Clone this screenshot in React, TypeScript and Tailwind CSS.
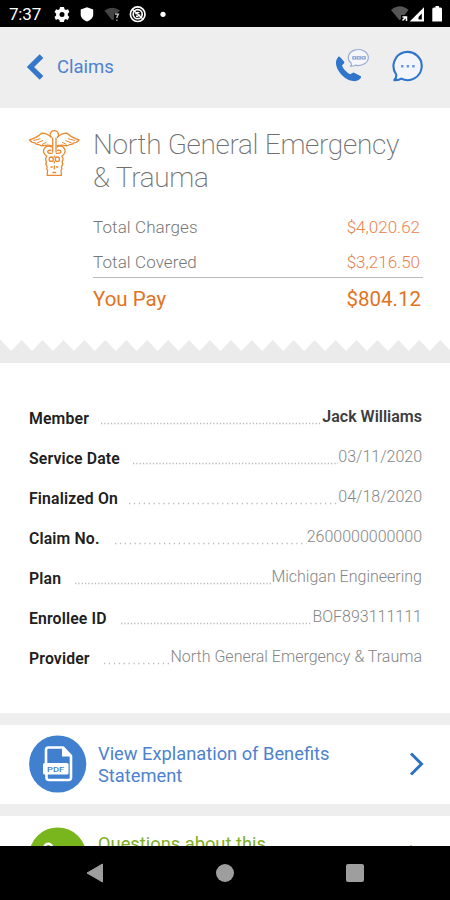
import React from "react";

type Detail = {
  label: string;
  labelWidth: string;
  value: string;
  period: number;
  valueClass: string;
};

const light = "font-light text-[#858585]";

const details: Detail[] = [
  { label: "Member", labelWidth: "w-[71px]", value: "Jack Williams", period: 3.3, valueClass: "font-semibold text-[#3c3c3c]" },
  { label: "Service Date", labelWidth: "w-[103px]", value: "03/11/2020", period: 3.3, valueClass: light },
  { label: "Finalized On", labelWidth: "w-[99px]", value: "04/18/2020", period: 4.9, valueClass: light },
  { label: "Claim No.", labelWidth: "w-[85px]", value: "2600000000000", period: 4.9, valueClass: light },
  { label: "Plan", labelWidth: "w-[45px]", value: "Michigan Engineering", period: 3.3, valueClass: light },
  { label: "Enrollee ID", labelWidth: "w-[91px]", value: "BOF893111111", period: 3.3, valueClass: light },
  { label: "Provider", labelWidth: "w-[74px]", value: "North General Emergency & Trauma", period: 4.9, valueClass: light },
];

function StatusBar() {
  return (
    <header className="flex h-[27px] shrink-0 items-center bg-black text-white">
      <span className="ml-[9px] w-[45px] text-[17px] leading-[28px] tracking-[-0.2px]">7:37</span>
      <svg width="120" height="27" viewBox="54 0 120 27" className="block">
        <path fill="#fff" fillRule="evenodd" d="M60 7h4l.5 2.2 1.5.8 2-.7 1.4 2.8-1.6 1.5v1.8l1.5 1.5-1.7 3-2-.8-1.2.8-.5 2h-4l-.5-2-1.5-.8-2 .8-1.4-3 1.6-1.5v-1.8l-1.6-1.5 1.7-2.8 1.8.7 1.5-.8zM62 12a2.5 2.5 0 1 0 0 5a2.5 2.5 0 0 0 0-5z" />
        <path fill="#fff" d="M87 7.3l6.2 2.2v5.2c0 3-2.6 5.2-6.2 6.8-3.6-1.6-6.3-3.8-6.3-6.8V9.500z" />
        <path fill="#444" d="M104.500 10.500q7.500-5.500 15.500 0l-3 3h-3v6l-2 .7z" />
        <path fill="none" stroke="#c9c9c9" strokeWidth="1.300" d="M114.900 14.200h3.500l-1.500 3v.9M116.900 19.400v1.300" />
        <circle cx="137.700" cy="14.200" r="7.300" fill="none" stroke="#fff" strokeWidth="1.700" />
        <circle cx="137.700" cy="14.200" r="4.500" fill="none" stroke="#fff" strokeWidth="1.700" />
        <path fill="none" stroke="#fff" strokeWidth="1.400" d="M132 9l11.500 10.500M135.500 14.200q1-2.500 4-1.500M140 14.500q-1 2.300-4 1.500" />
        <circle cx="163" cy="14.300" r="2.600" fill="#fff" />
      </svg>
      <svg width="60" height="27" viewBox="390 0 60 27" className="ml-auto block">
        <path fill="#555" d="M391 10q9-7.500 17.500 0l-4 5h-3.500v4l-1.500 1.200z" />
        <path fill="none" stroke="#fff" strokeWidth="1.500" d="M402.500 20.500l4-4M402.500 17h4v4" />
        <path fill="#fff" fillRule="evenodd" d="M424 7.200v14.300h-14.300zM421.800 13.500v6h-3.300v-2.500z" />
        <path fill="#fff" d="M434 7.500h1.500V6h3.500v1.500h1.500q1.500 0 1.500 1.500v12.500h-9.700V9q0-1.500 1.700-1.500z" />
      </svg>
    </header>
  );
}

function CallIcon() {
  return (
    <svg width="36" height="36" viewBox="334 46 36 36" className="block">
      <path fill="#2e75cb" d="M338.300 55.700q.9-.7 1.700.2l4 4.500q.8 1-.1 2l-2 2q2.200 5.500 8.300 8.800l2.300-1.300q1.100-.6 2.100 0l5.900 3.200q1.100.8.300 1.800-2.100 3-5.500 3.300-7.600 0-13.800-6.500-5.300-5.500-5.600-11.600 0-3.600 2.400-6.400z" />
      <path fill="#f5f5fa" stroke="#9aabd9" strokeWidth="1.200" d="M351 62a10 8 0 1 1 4.400 2.200q-2 1-4.600.9 1.200-1.300.2-3.100z" />
      <path fill="none" stroke="#7f9ad0" strokeWidth="1.100" d="M352.800 58v-2.300h3v2.300h-3zM357.300 58v-2.300h3v2.300h-3zM362 58v-2.300h3.200v2.300z" />
    </svg>
  );
}

function ChatIcon() {
  return (
    <svg width="34" height="36" viewBox="391 46 34 36" className="block">
      <path fill="#f3f5fa" stroke="#2e75cb" strokeWidth="2.100" strokeLinejoin="round" d="M396 73a14.100 14.100 0 1 1 5.300 4.600q-2.700 1.900-7 1.500 2.700-2.500 1.700-6.100z" />
      <path fill="#6c98d6" d="M401 64h2.500v2.500H401zM406.600 64h2.500v2.500h-2.500zM412.200 64h2.500v2.500h-2.500z" />
    </svg>
  );
}

function Caduceus() {
  return (
    <svg width="54" height="50" viewBox="27 128 54 50" fill="none" stroke="#e98a33" strokeWidth="1.300" strokeLinejoin="round" className="block">
      <path d="M51.500 137.500q-1.800-1.500-1.400-3.500 1-3.400 4.200-3.400t4.200 3.400q.4 2-1.400 3.500" />
      <path d="M51.500 137.500q-5-4.500-10-4.300-4.500 4.500-12 6.600 2.200 3 5.500 3.100 1.200 2.100 4.200 1.700 1.500 1.500 4.300 1 4-.9 8.500.3M57.100 137.500q5-4.500 10-4.300 4.500 4.500 12 6.600-2.200 3-5.500 3.100-1.200 2.100-4.200 1.700-1.500 1.500-4.300 1-4-.9-8.500.3" />
      <path strokeWidth="1" d="M33.500 140.500l7-1.800M37 143l6-2.500M42 144.500l4.500-2.300M75 140.500l-7-1.800M71.500 143l-6-2.500M66.500 144.500l-4.500-2.300" />
      <path d="M52.700 137.500v15M56 137.500v15" />
      <path d="M52 147.300q-3.500-2-6.300-.4-3.200 2.600-1.800 6 .7 2 3 3.300-2.500 3-.4 5.500-1.500 2.500.6 5-1 2 .5 3.700l-.5 4.900h14.400l-.5-4.900q1.500-1.700.5-3.700 2.100-2.500.6-5 2.100-2.500-.4-5.500 2.300-1.300 3-3.300 1.400-3.400-1.800-6-2.800-1.600-6.300.4" />
      <path d="M51.500 150.500q-3.500-.8-4 1.300 1.300 2.200 5.200 1.300M57.100 150.500q3.500-.8 4 1.300-1.300 2.200-5.200 1.300" />
      <ellipse cx="51.200" cy="159.200" rx="2.100" ry="2.200" />
      <ellipse cx="57.400" cy="159.200" rx="2.100" ry="2.200" />
      <path d="M54.300 155.500v2M54.300 161v2.500M50.500 167h2.200M56 167h2.200M54.300 165.500v4M52.500 172.500h3.600" />
    </svg>
  );
}

function TornEdge() {
  const points = Array.from({ length: 23 }, (_, i) => {
    const x = 0.700 + i * 20.930;
    return `${x},340 ${x + 10.460},351`;
  }).join(" ");
  return (
    <svg width="450" height="24" viewBox="0 339 450 24" className="block shrink-0">
      <polygon fill="#ebebeb" points={`0,340 ${points} 462,363 0,363`} />
    </svg>
  );
}

function PdfBadge() {
  return (
    <svg width="58" height="58" viewBox="0 0 58 58" className="-mt-[2px] block shrink-0">
      <circle cx="28.700" cy="29" r="28.600" fill="#4180cf" />
      <path fill="none" stroke="#fff" strokeWidth="2.600" strokeLinejoin="round" d="M17 29V15q0-2.500 2.500-2.500H34l8 8.500V42.500q0 2.500-2.500 2.500H20q-2.500 0-2.500-2.500v-4" />
      <path fill="#fff" d="M33 12v9.500h9.500z" />
      <rect x="14" y="28" width="25.500" height="11.500" rx="1.500" fill="#fff" />
      <text x="26.600" y="36.800" textAnchor="middle" fontSize="8" fontWeight="500" textLength="17" lengthAdjust="spacingAndGlyphs" fill="#4180cf">PDF</text>
    </svg>
  );
}

export default function App() {
  return (
    <div className="flex h-[900px] w-[450px] flex-col overflow-hidden bg-white font-['Roboto',sans-serif]">
      <StatusBar />
      <nav className="flex h-[81px] shrink-0 items-center bg-[#eeeeee] pb-[2px]">
        <svg width="19" height="28" viewBox="0 0 19 28" className="ml-[26px]">
          <path fill="none" stroke="#3477cb" strokeWidth="5.200" d="M15.500 3.200L4.500 14 15.500 24.800" />
        </svg>
        <span className="ml-3 text-[18.500px] leading-6 text-[#4d82cf]">Claims</span>
        <div className="mt-[-4px] mr-[25px] ml-auto flex gap-[21px]">
          <CallIcon />
          <ChatIcon />
        </div>
      </nav>

      <section className="flex h-[231px] shrink-0 pt-5 pl-[27px]">
        <Caduceus />
        <div className="ml-3 w-[330px]">
          <h1 className="mt-[1px] h-[65px] text-[28px] leading-[32.500px] font-[200] tracking-[-0.3px] whitespace-nowrap text-[#6f6f6f]">
            North General Emergency<br />&amp; Trauma
          </h1>
          <div className="mt-[14px] flex h-[35px] justify-between pr-[3px] text-[17px] leading-[38px]">
            <span className="font-light tracking-[0.100px] text-[#777]">Total Charges</span>
            <span className="font-light text-[#e9824c]">$4,020.62</span>
          </div>
          <div className="flex h-[35px] justify-between border-b border-[#bcbcbc] pr-[3px] text-[17px] leading-[38px]">
            <span className="font-light tracking-[0.100px] text-[#777]">Total Covered</span>
            <span className="font-light text-[#e9824c]">$3,216.50</span>
          </div>
          <div className="flex justify-between pr-[2px] text-[20.500px] leading-[43px] text-[#e2731f]">
            <span>You Pay</span>
            <span>$804.12</span>
          </div>
        </div>
      </section>
      <TornEdge />

      <section className="flex h-[350px] shrink-0 flex-col pt-[35px] pr-7 pl-[29px]">
        {details.map((d) => (
          <div key={d.label} className="flex h-10 text-[16px] leading-10">
            <span className={`${d.labelWidth} mt-[1px] shrink-0 text-[15.800px] font-semibold tracking-[0.140px] whitespace-nowrap text-[#202020]`}>{d.label}</span>
            <svg height="40" className="block min-w-0 flex-1">
              <line x1="1" y1="25.500" x2="100%" y2="25.500" stroke="#bbb" strokeWidth="1.300" strokeDasharray={`1.300 ${d.period - 1.300}`} />
            </svg>
            <span className={`${d.valueClass} -mt-[1.500px] shrink-0 whitespace-nowrap`}>{d.value}</span>
          </div>
        ))}
      </section>

      <section className="flex h-[103px] shrink-0 items-center border-y-12 border-[#eeeeee] pl-[29px]">
        <PdfBadge />
        <p className="ml-[11px] flex-1 text-[18.300px] leading-[22px] text-[#4d82cf]">View Explanation of Benefits<br />Statement</p>
        <svg width="16" height="26" viewBox="0 0 16 26" className="-mt-[1px] mr-[25px]">
          <path fill="none" stroke="#2f72c4" strokeWidth="3" d="M2 2.500l10.500 10.500L2 23.500" />
        </svg>
      </section>
      <section className="flex h-[30px] shrink-0 items-start overflow-hidden pl-[29px]">
        <svg width="58" height="58" viewBox="0 0 58 58" className="mt-[11px] block shrink-0">
          <circle cx="28.700" cy="29" r="28.600" fill="#79b51c" />
          <path fill="none" stroke="#fff" strokeWidth="2.500" d="M15.500 19.500q1-2.800 3.700-2.800t3.800 2.800" />
        </svg>
        <p className="mt-[17px] ml-[11px] flex-1 text-[18.300px] leading-[22px] whitespace-nowrap text-[#7eae25]">Questions about this</p>
        <svg width="16" height="30" viewBox="0 0 16 30" className="mr-6 shrink-0">
          <path fill="none" stroke="#79b51c" strokeWidth="3" d="M0 30l10 10" />
        </svg>
      </section>
      <footer className="flex h-[54px] shrink-0 items-center justify-between bg-black pr-[86px] pl-[86px]">
        <svg width="18" height="20" viewBox="0 0 18 20"><path fill="#9e9e9e" stroke="#9e9e9e" strokeLinejoin="round" d="M1 10L16.500 1v18z" /></svg>
        <div className="size-[18px] rounded-full bg-[#9e9e9e]" />
        <div className="size-[18px] rounded-[2px] bg-[#9e9e9e]" />
      </footer>
    </div>
  );
}
